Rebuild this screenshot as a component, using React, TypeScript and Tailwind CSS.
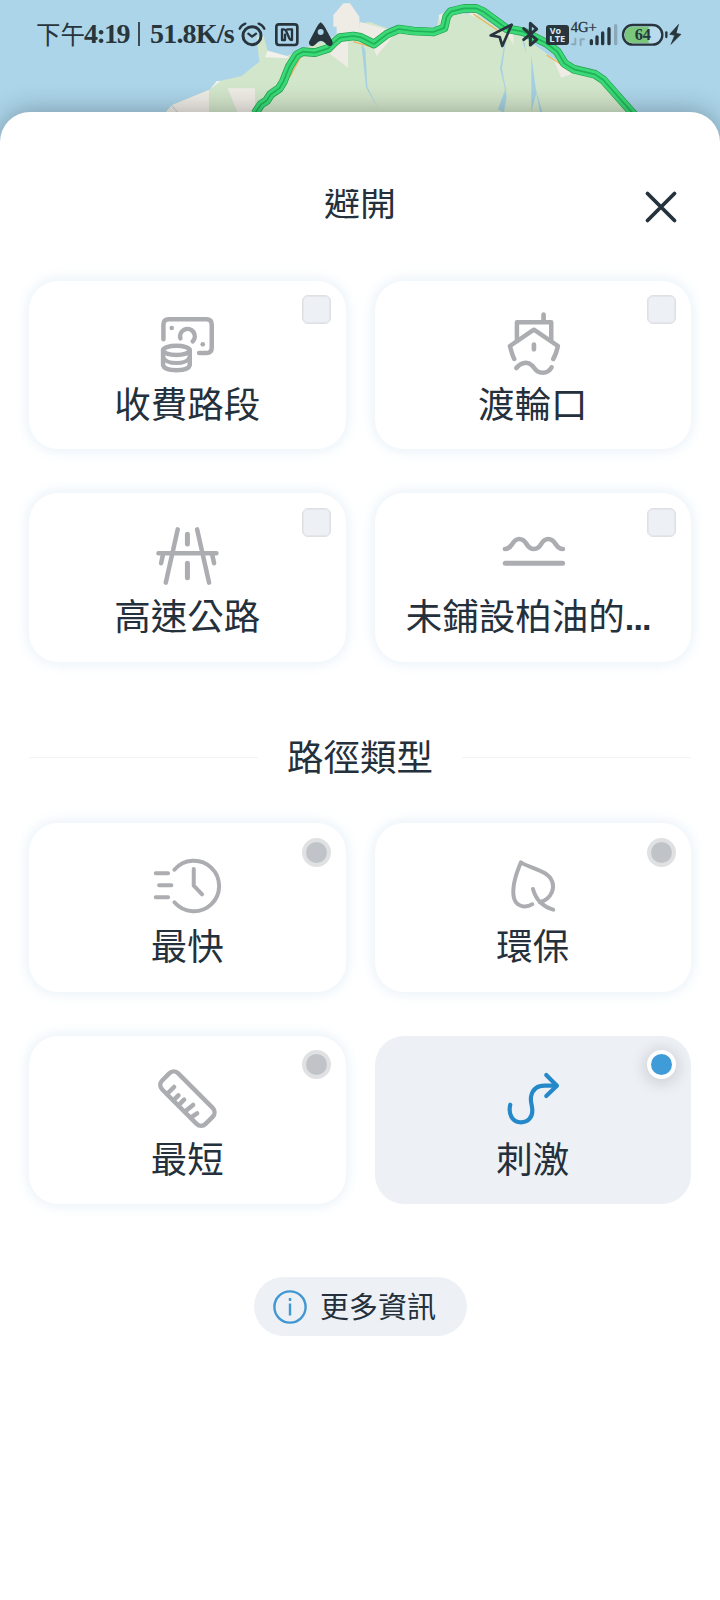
import React, { useState } from 'react';

interface OptionProps {
  label: string;
  icon: React.ReactNode;
  viewBox: string;
  kind: 'checkbox' | 'radio';
  selected?: boolean;
  truncated?: boolean;
  onSelect: () => void;
}

const ROAD =
  'M765 340L783 313L800 302L812 283L838 265L850 245L868 200L890 165L908 155L945 158L985 145L1002 128L1020 113L1060 108L1082 112L1122 132L1160 103L1196 87L1240 93L1300 96L1332 84L1340 50L1352 35L1392 25H1428L1450 35L1520 86L1570 95L1640 130L1672 155L1693 190L1722 208L1785 223L1810 240L1903 345';

const MapBackdrop: React.FC = () => (
  <svg viewBox="0 0 2160 432" className="block h-[144px] w-full" fill="none">
    <rect width="2160" height="432" fill="#acd5ea" />
    <path d="M498 336L515 316L630 268L650 245L725 228L778 185L770 110L790 105L803 152L860 168L900 150L1000 110L1080 70L1110 66L1190 95L1310 80L1318 45L1430 40L1500 90L1570 110L1660 175L1720 205L1810 240L1910 336Z" fill="#d2e6cb" />
    <path d="M498 336L515 316L627 270L627 336Z" fill="#efece6" />
    <path d="M683 265L765 265L765 336H712Z" fill="#efece6" />
    <path d="M795 172L803 152L860 168L870 175Z" fill="#f3f1ec" />
    <path d="M630 268L650 243L662 243Z" fill="#f3f1ec" />
    <path d="M1000 45L1030 10H1050L1078 50L1080 100L1044 105L1044 203L985 158L1010 110V80H1000Z" fill="#efebe5" />
    <path d="M1080 66L1190 95L1130 168L1118 138L1080 110Z" fill="#efece6" />
    <path d="M1316 45L1345 33L1322 80ZM1405 38H1445L1420 50ZM1515 90L1540 134L1540 100Z" fill="#efece6" />
    <path d="M1658 174L1700 205L1715 222L1684 233Z" fill="#efebe5" />
    <path d="M515 316L532 336" stroke="#b9c9cc" strokeWidth="3" />
    <path d="M1084 130L1096 150L1102 260L1136 330L1098 262Z" fill="#a6d0e2" />
    <path d="M1515 130L1501 205L1517 268L1495 328L1511 336L1519 290L1515 262L1505 205Z" fill="#a6d0e2" stroke="#a6d0e2" strokeWidth="2" />
    <path d="M1594 165V336L1609 280L1620 336H1627L1608 270ZM1566 120L1579 160L1574 128Z" fill="#a6d0e2" />
    <path d="M905 165L870 230M1060 125L1122 143M1190 82L1280 88M1420 42L1500 96M1640 165L1690 198" stroke="#eab55c" strokeWidth="4" />
    <path d={ROAD} stroke="#239b4c" strokeWidth="26" strokeLinejoin="round" />
    <path d={ROAD} stroke="#3bd977" strokeWidth="22" strokeLinejoin="round" />
    <path d={ROAD} stroke="#1fb258" strokeWidth="5" strokeLinejoin="round" />
  </svg>
);

const StatusBar: React.FC = () => (
  <div className="absolute inset-x-0 top-0 flex h-[68px] items-center justify-between pl-[36px] pr-[38px] text-[#28353c]">
    <div className="flex items-center whitespace-nowrap">
      <span className="w-[48px] font-['Noto_Sans_CJK_TC',sans-serif] text-[24.5px] font-normal leading-[66px]">下午</span>
      <span className="w-[54px] font-['Liberation_Serif',serif] text-[28px] font-bold leading-[68px] tracking-[-1.6px]">4:19</span>
      <span className="mr-[10px] h-[24px] w-[2px] bg-[#3b4a52]" />
      <span className="w-[88px] font-['Liberation_Serif',serif] text-[28px] font-bold leading-[68px] tracking-[-0.8px]">51.8K/s</span>
      <svg viewBox="714 60 291 84" className="h-[28px] w-[97px]" fill="none" stroke="currentColor" strokeLinecap="round" strokeLinejoin="round">
        <circle cx="756" cy="107" r="27" strokeWidth="9" />
        <path d="M745 101L756 110L768 101" strokeWidth="7" />
        <path d="M719 86Q724 75 736 71M793 86Q788 75 776 71" strokeWidth="7" />
        <rect x="829" y="73" width="63" height="62" rx="8" strokeWidth="8" />
        <path d="M846 120V88H851Q855 88 858 92L868 115Q871 120 876 120V88H862M846 120H855V104" strokeWidth="7" />
        <path fill="currentColor" stroke="none" fillRule="evenodd" d="M962 67Q970 72 975 82L997 123Q1001 136 990 138Q984 139 979 133Q962 112 947 133Q941 140 934 138Q924 134 928 124L950 82Q955 71 962 67ZM962 87A9 9 0 1 0 962 105A9 9 0 1 0 962 87Z" />
      </svg>
    </div>
    <svg viewBox="1464 54 582 96" className="h-[32px] w-[194px]" fill="none" stroke="currentColor" strokeLinecap="round" strokeLinejoin="round">
      <path d="M1535 74L1472 106L1499 111L1507 138Z" strokeWidth="8" />
      <path d="M1571 86L1610 119L1591 135V70L1610 87L1571 119" strokeWidth="9" />
      <rect x="1638" y="75" width="69" height="60" rx="9" fill="currentColor" stroke="none" />
      <g stroke="none" fill="#dceaf2" fontFamily="Open Sans, sans-serif" fontWeight="700">
        <text x="1649" y="102" fontSize="26" textLength="34" lengthAdjust="spacingAndGlyphs">Vo</text>
        <text x="1648" y="127" fontSize="26" textLength="48" lengthAdjust="spacingAndGlyphs">LTE</text>
      </g>
      <text x="1712" y="97" fontSize="44" fontFamily="Liberation Serif, serif" fill="currentColor" stroke="currentColor" strokeWidth="1">4G+</text>
      <path d="M1716 133H1726V116M1742 135V118H1752" stroke="#8ca9b8" strokeWidth="6" />
      <path d="M1774 122V131M1791 111V131M1808 99V131M1827 86V131" strokeWidth="10" />
      <path d="M1847 77V131" stroke="#8aa8b8" strokeWidth="10" />
      <rect x="1869" y="75" width="118" height="59" rx="29" fill="#b9dbed" strokeWidth="7" />
      <path d="M1946 80V129H1897Q1874 126 1874 104Q1874 82 1897 80Z" fill="#7ac77c" stroke="none" />
      <path d="M1999 97V111" strokeWidth="7" />
      <text x="1904" y="121" fontSize="52" fontWeight="700" fontFamily="Liberation Serif, serif" fill="currentColor" stroke="none" textLength="49" lengthAdjust="spacingAndGlyphs">64</text>
      <path d="M2035 74L2009 103L2024 106L2013 133L2043 103L2029 100Z" fill="currentColor" strokeWidth="2" />
    </svg>
  </div>
);

const OptionCard: React.FC<OptionProps> = ({ label, icon, viewBox, kind, selected, truncated, onSelect }) => (
  <button
    type="button"
    onClick={onSelect}
    className={`relative flex h-[168.5px] flex-col items-center rounded-[29px] pt-[27px] ${
      selected ? 'bg-[#edf1f6]' : 'bg-white shadow-[0_0_14px_2px_#e8f1f8]'
    }`}
  >
    <svg
      viewBox={viewBox}
      className={`h-[72px] w-[80px] shrink-0 ${selected ? 'text-[#2588c8]' : 'text-[#abadb1]'}`}
      fill="none"
      stroke="currentColor"
      strokeWidth="13.5"
      strokeLinecap="round"
      strokeLinejoin="round"
    >
      {icon}
    </svg>
    <span className={`mt-px whitespace-nowrap text-[36.5px] leading-[44px] ${truncated ? 'pr-[9px]' : ''}`}>
      {label}
      {truncated && (
        <span className="font-['Liberation_Sans',sans-serif] text-[34px] font-bold tracking-[-0.8px]">...</span>
      )}
    </span>
    {kind === 'checkbox' ? (
      <span className="absolute right-[15px] top-[14.5px] size-[29px] rounded-[6px] border-[1.5px] border-[#dfe0e4] bg-[#edf1f6] shadow-[inset_0_0_0_1px_#e4e6ea]" />
    ) : (
      <span
        className={`absolute right-[15px] top-[14.5px] size-[29px] rounded-full border-4 ${
          selected ? 'border-white bg-[#409bd9] shadow-[0_2px_16px_2px_#00000028]' : 'border-[#e0e1e3] bg-[#c0c4c9]'
        }`}
      />
    )}
  </button>
);

const AVOID = [
  {
    label: '收費路段',
    viewBox: '381.75 112 240 216',
    icon: (
      <>
        <path d="M431 206V162Q431 146 447 146H560Q576 146 576 162V231Q576 247 560 247H538" />
        <path d="M482 203A22 22 0 1 1 519 212" />
        <circle cx="456" cy="172" r="7" fill="currentColor" stroke="none" />
        <circle cx="549" cy="221" r="7" fill="currentColor" stroke="none" />
        <ellipse cx="470" cy="239" rx="40" ry="14" />
        <path d="M430 239V284Q433 298 470 299Q507 298 510 284V239" />
        <path d="M430 260Q438 277 470 277Q502 277 510 260" strokeWidth="12" />
      </>
    ),
  },
  {
    label: '渡輪口',
    viewBox: '383.25 112 240 216',
    icon: (
      <>
        <path d="M455 211V155H558V211" />
        <path d="M535 153V132M506 222V236" strokeWidth="14" />
        <path d="M447 265Q441 253 434 226L506 177L578 226Q573 250 564 265" />
        <path d="M453 292C467 274 487 272 500 284C511 295 513 306 533 306Q550 306 559 290" />
      </>
    ),
  },
  {
    label: '高速公路',
    viewBox: '381.75 104 240 216',
    icon: (
      <>
        <path d="M416 204H590M474 132L438 292M532 132L568 292M430 206L424 234M577 206L583 234" />
        <path d="M503 147V176M503 234V277" strokeWidth="15" />
      </>
    ),
  },
  {
    label: '未鋪設柏油的',
    truncated: true,
    viewBox: '383.25 104 240 216',
    icon: (
      <>
        <path d="M419 191C444 191 438 161 462 161C488 161 480 191 506 191C532 191 524 161 549 161C574 161 568 191 593 191" strokeWidth="14" />
        <path d="M420 234H592" strokeWidth="15" />
      </>
    ),
  },
];

const ROUTES = [
  {
    label: '最快',
    viewBox: '381.75 104 240 216',
    icon: (
      <>
        <path d="M464 163A76 76 0 1 1 464 261" strokeWidth="12" />
        <path d="M522 161V211L547 237" strokeWidth="12" />
        <path d="M408 174H445M418 210H455M408 246H445" strokeWidth="12" />
      </>
    ),
  },
  {
    label: '環保',
    viewBox: '383.25 104 240 216',
    icon: (
      <>
        <path d="M501 267C477 281 452 271 446 247C439 217 453 174 467 141C487 154 516 160 538 173C563 188 568 211 560 230C552 249 539 257 524 260" strokeWidth="12" />
        <path d="M503 221Q510 245 524 260Q542 277 564 283" strokeWidth="12" />
      </>
    ),
  },
  {
    label: '最短',
    viewBox: '381.75 113 240 216',
    icon: (
      <>
        <rect x="411" y="186" width="184" height="68" rx="19" transform="rotate(45 503 220)" />
        <path d="M442 206L463 185M461 225L476 210M476 240L493 223M495 259L520 239M514 276L532 264" />
      </>
    ),
  },
  {
    label: '刺激',
    viewBox: '383.25 113 240 216',
    icon: (
      <>
        <path d="M435 238C428 269 443 291 467 291C489 291 503 275 501 252C500 236 494 226 498 211C503 191 517 181 538 181H574" strokeWidth="12.5" />
        <path d="M543 149L575 181L543 212" strokeWidth="12.5" />
      </>
    ),
  },
];

const App: React.FC = () => {
  const [route, setRoute] = useState('刺激');

  return (
    <div className="relative h-[1600px] w-[720px] overflow-hidden bg-white font-['Noto_Sans_CJK_TC',sans-serif] text-[#24303b]">
      <MapBackdrop />
      <StatusBar />

      <main className="relative -mt-[32px] h-[1488px] rounded-t-[30px] bg-white px-[29px] shadow-[0_0_28px_#00000050]">
        {/* Title */}
        <header className="relative flex justify-center pt-[77px]">
          <h1 className="flex h-[33px] items-end overflow-hidden text-[36px] leading-[44px]">避開</h1>
          <button type="button" aria-label="關閉" className="absolute right-[12px] top-[77px]">
            <svg viewBox="0 0 36 36" className="size-[36px]" fill="none" stroke="#24323d" strokeWidth="3.8" strokeLinecap="round">
              <path d="M4.5 4.5L31.5 31.5M31.5 4.5L4.5 31.5" />
            </svg>
          </button>
        </header>

        <section className="mt-[58.5px] grid grid-cols-2 gap-x-[29px] gap-y-[44px]">
          {AVOID.map(item => (
            <OptionCard key={item.label} {...item} kind="checkbox" onSelect={() => undefined} />
          ))}
        </section>

        {/* Route type */}
        <div className="mt-[71px] flex h-[50px] items-center">
          <span className="h-px flex-1 bg-[#f2f4f6]" />
          <h2 className="w-[204px] pb-[4px] text-center text-[36.5px] leading-[46px]">路徑類型</h2>
          <span className="h-px flex-1 bg-[#f2f4f6]" />
        </div>

        <section className="mt-[40.5px] grid grid-cols-2 gap-x-[29px] gap-y-[44px]">
          {ROUTES.map(item => (
            <OptionCard
              key={item.label}
              {...item}
              kind="radio"
              selected={route === item.label}
              onSelect={() => setRoute(item.label)}
            />
          ))}
        </section>

        <div className="mt-[73px] flex justify-center">
          <button type="button" className="flex h-[59px] w-[213px] items-center rounded-full bg-[#edf1f6] pl-[19.5px]">
            <svg viewBox="0 0 34 34" className="size-[34px]" fill="none" stroke="#4097d2" strokeWidth="2.4">
              <circle cx="17" cy="17" r="15.6" />
              <path d="M17 13.5V25.5M17 8V11" />
            </svg>
            <span className="ml-[13px] pb-[3px] text-[29px] leading-[56px]">更多資訊</span>
          </button>
        </div>
      </main>
    </div>
  );
};

export default App;
